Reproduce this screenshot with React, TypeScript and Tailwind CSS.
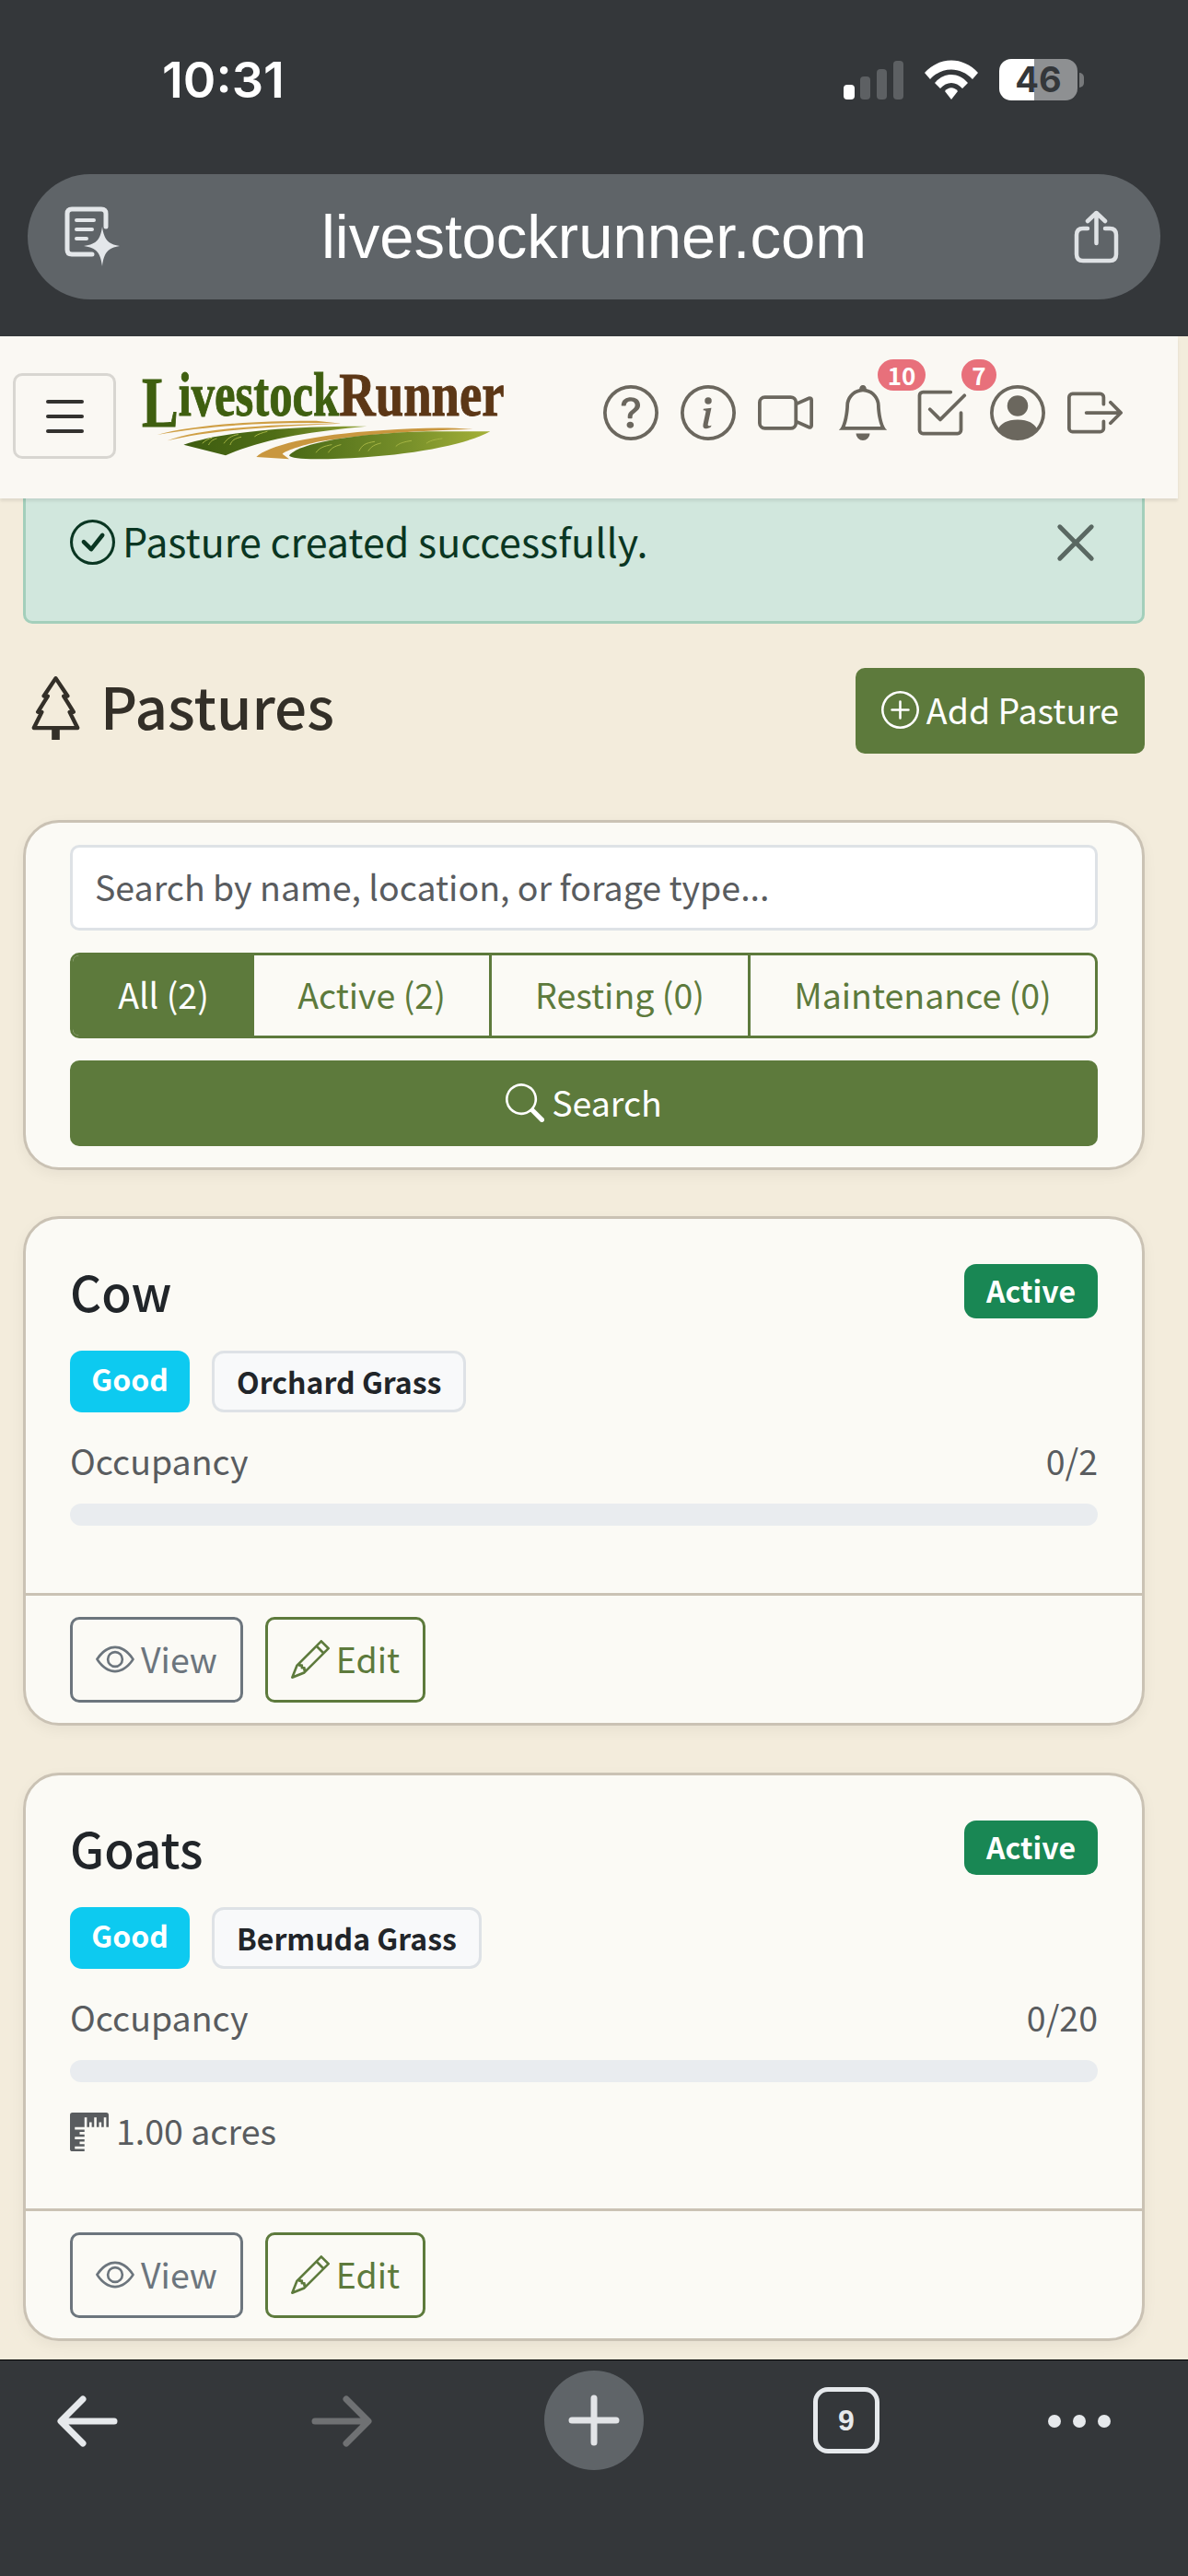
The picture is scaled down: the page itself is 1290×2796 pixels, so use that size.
import { ReactNode } from 'react';
import {
  BsBell,
  BsBoxArrowRight,
  BsCameraVideo,
  BsCheck2Square,
  BsCheckCircle,
  BsEye,
  BsInfoCircle,
  BsPencil,
  BsPersonCircle,
  BsPlusCircle,
  BsQuestionCircle,
  BsRulers,
  BsSearch,
  BsTree,
  BsXLg,
} from 'react-icons/bs';

interface Pasture {
  name: string;
  forage: string;
  occupancy: string;
  acres?: string;
}

const pastures: Pasture[] = [
  { name: 'Cow', forage: 'Orchard Grass', occupancy: '0/2' },
  { name: 'Goats', forage: 'Bermuda Grass', occupancy: '0/20', acres: '1.00 acres' },
];

const StatusBar = () => (
  <div className="flex h-[189px] items-start justify-between pl-[176px] pr-[113px] pt-[58px]">
    <span className="font-['Inter',sans-serif] text-[54px] font-semibold leading-[58px] text-white">10:31</span>
    <div className="flex items-center gap-[23px] pt-[6px]">
      <svg width="65" height="42" viewBox="0 0 65 42">
        <rect x="0" y="26" width="12" height="16" rx="4" fill="#fff" />
        <rect x="18" y="17" width="11" height="25" rx="4" fill="#5d6063" />
        <rect x="36" y="9" width="11" height="33" rx="4" fill="#5d6063" />
        <rect x="54" y="0" width="11" height="42" rx="4" fill="#5d6063" />
      </svg>
      <svg width="58" height="43" viewBox="0 0 58 43" fill="#fff">
        <path d="M0 14 C16 -4 42 -4 58 14 L52 21 C39 7 19 7 6 21 Z" />
        <path d="M11 25 C21 13 37 13 47 25 L41 31 C34 23 24 23 17 31 Z" />
        <path d="M22 34 C26 29 32 29 36 34 L29 43 Z" />
      </svg>
      <div className="flex items-center">
        <div className="flex h-[45px] w-[85px] items-center justify-center rounded-[13px] bg-[linear-gradient(90deg,#ffffff_45%,#8e9092_45%)] font-['Inter',sans-serif] text-[38px] font-bold text-[#34373a]">
          46
        </div>
        <div className="ml-[2px] h-[16px] w-[5px] rounded-r-full bg-[#77797b]" />
      </div>
    </div>
  </div>
);

const AddressBar = () => (
  <div className="mx-[30px] flex h-[136px] items-center justify-between rounded-[68px] bg-[#5f6468] pl-[40px] pr-[45px]">
    <svg width="62" height="66" viewBox="0 0 62 66" fill="none" stroke="#e4e7ea" strokeWidth="5">
      <path d="M30 52 H8 Q3 52 3 47 V8 Q3 3 8 3 H40 Q45 3 45 8 V22" strokeLinecap="round" />
      <path d="M13 15 H32 M13 25 H30 M13 35 H24" strokeLinecap="round" strokeWidth="4" />
      <path d="M41 22 C43 36 47 41 60 43 C47 45 43 50 41 65 C39 50 35 45 21 43 C35 41 39 36 41 22 Z" fill="#e4e7ea" stroke="none" />
    </svg>
    <span className="mr-[8px] pb-[2px] font-['Liberation_Sans',sans-serif] text-[67px] leading-none text-white">livestockrunner.com</span>
    <svg width="49" height="58" viewBox="0 0 49 58" fill="none" stroke="#dfe2e5" strokeWidth="4.5" strokeLinecap="round" strokeLinejoin="round">
      <path d="M15 20 H10 Q3 20 3 27 V48 Q3 55 10 55 H39 Q46 55 46 48 V27 Q46 20 39 20 H34" />
      <path d="M24.5 36 V3 M15 12 L24.5 3 L34 12" />
    </svg>
  </div>
);

const Logo = () => (
  <svg width="440" height="140" viewBox="0 0 1320 420" className="mb-[2px] ml-[4px] shrink-0">
    <defs>
      <linearGradient id="fieldLeft" x1="0" x2="1" y1="0" y2="0">
        <stop offset="0" stopColor="#3d5c10" />
        <stop offset="0.5" stopColor="#4f6d16" />
        <stop offset="1" stopColor="#93a538" />
      </linearGradient>
      <linearGradient id="fieldRight" x1="0" x2="1" y1="0" y2="0">
        <stop offset="0" stopColor="#4a6a17" />
        <stop offset="0.6" stopColor="#78902a" />
        <stop offset="1" stopColor="#a5b138" />
      </linearGradient>
    </defs>
    <text transform="translate(72 210) scale(0.76 1)" fontFamily="Liberation Serif, serif" fontWeight="700" fontSize="200" fill="#3f5f10" stroke="#3f5f10" strokeWidth="3">
      <tspan fontSize="235" dy="35">L</tspan>
      <tspan dy="-35">ivestock</tspan>
    </text>
    <text transform="translate(715 210) scale(0.8 1)" fontFamily="Liberation Serif, serif" fontWeight="700" fontSize="205" fill="#5c3716" stroke="#5c3716" strokeWidth="3">Runner</text>
    <path d="M122 273 C220 245 420 226 640 227 L722 236 C520 230 300 240 122 273 Z" fill="#cf9f45" />
    <path d="M155 292 C260 252 480 238 722 236 C500 246 300 256 155 292 Z" fill="#cf9f45" />
    <path d="M208 305 C340 262 560 244 805 245 C620 262 470 285 345 340 Z" fill="url(#fieldLeft)" />
    <path d="M445 345 C480 310 620 272 860 258 C960 250 1080 248 1150 255 C1000 258 800 270 650 295 C590 308 540 325 530 335 L552 352 Z" fill="#c9973f" />
    <path d="M552 340 C590 295 800 265 1020 262 L1207 262 C1120 310 900 350 640 352 C590 352 555 348 552 340 Z" fill="url(#fieldRight)" />
    <g fill="none" stroke="#a6b544" strokeWidth="3" strokeLinecap="round">
      <path d="M270 300 C280 290 290 285 300 283 M290 305 C295 295 300 290 315 285 M340 300 C350 285 365 275 385 272 M360 305 C365 290 375 285 395 280 M440 278 C450 270 465 266 480 262" />
      <path d="M640 330 C650 315 665 310 690 305 M680 330 C690 315 700 310 720 305 M780 325 C790 305 800 300 830 295 M810 325 C820 310 830 305 850 300 M900 310 C910 300 925 296 950 292 M1000 300 C1010 292 1025 288 1050 285" />
    </g>
  </svg>
);

const HeaderIcons = () => (
  <div className="flex items-center gap-[24px] pb-[7px] text-[#6b675e]">
    <BsQuestionCircle size={60} />
    <BsInfoCircle size={60} />
    <BsCameraVideo size={60} />
    <div className="relative">
      <BsBell size={60} />
      <span className="absolute left-[46px] top-[-28px] flex h-[34px] w-[52px] items-center justify-center rounded-full bg-[#e8707b] text-[26px] font-bold leading-none text-white">10</span>
    </div>
    <div className="relative">
      <BsCheck2Square size={60} />
      <span className="absolute left-[53px] top-[-28px] flex h-[34px] w-[38px] items-center justify-center rounded-full bg-[#e8707b] text-[26px] font-bold leading-none text-white">7</span>
    </div>
    <BsPersonCircle size={60} />
    <BsBoxArrowRight size={60} />
  </div>
);

const NavBar = () => (
  <nav className="relative z-10 flex h-[176px] w-[1279px] shrink-0 items-center bg-[#faf8f3] pb-[3px] pl-[14px] shadow-[0_3px_3px_rgba(0,0,0,0.08)]">
    <div className="flex h-[93px] w-[112px] flex-col items-center justify-center gap-[12px] rounded-[10px] border-[3px] border-[#d8d6d1]">
      <span className="h-[4px] w-[41px] rounded-full bg-[#33322f]" />
      <span className="h-[4px] w-[41px] rounded-full bg-[#33322f]" />
      <span className="h-[4px] w-[41px] rounded-full bg-[#33322f]" />
    </div>
    <Logo />
    <div className="ml-[85px]">
      <HeaderIcons />
    </div>
  </nav>
);

const Alert = () => (
  <div className="flex h-[136px] items-center justify-between rounded-b-[10px] border-[3px] border-t-0 border-[#a3cfbb] bg-[#d1e7dd] pb-[38px] pl-[48px] pr-[47px] text-[#0a3622]">
    <div className="flex items-center gap-[8px]">
      <BsCheckCircle size={49} />
      <span className="pb-[4px] text-[43px] leading-none">Pasture created successfully.</span>
    </div>
    <BsXLg size={50} stroke="currentColor" strokeWidth={0.6} className="text-[#5a6862]" />
  </div>
);

const SegmentButton = ({ label, active, className }: { label: string; active?: boolean; className: string }) => (
  <div className={`flex h-full items-center justify-center pb-[2px] text-[37.5px] ${active ? 'bg-[#5d7a3c] text-white' : 'text-[#5d7a3c]'} ${className}`}>
    {label}
  </div>
);

const SearchPanel = () => (
  <div className="mt-[72px] flex flex-col gap-[24px] rounded-[39px] border-[3px] border-[#cac2b4] bg-[#fbfaf5] px-[48px] pb-[23px] pt-[24px] shadow-[0_5px_15px_rgba(0,0,0,0.05)]">
    <div className="flex h-[93px] items-center rounded-[10px] border-[3px] border-[#dee2e6] bg-white px-[24px] pb-[2px] text-[37.5px] text-[#595c5f]">
      Search by name, location, or forage type...
    </div>
    <div className="flex h-[93px] overflow-hidden rounded-[10px] border-[3px] border-[#5d7a3c]">
      <SegmentButton label="All (2)" active className="w-[197px]" />
      <SegmentButton label="Active (2)" className="w-[258px] border-r-[3px] border-[#5d7a3c]" />
      <SegmentButton label="Resting (0)" className="w-[281px] border-r-[3px] border-[#5d7a3c]" />
      <SegmentButton label="Maintenance (0)" className="flex-1" />
    </div>
    <div className="flex h-[93px] items-center justify-center gap-[8px] rounded-[10px] bg-[#5d7a3c] pb-[2px] text-[37.5px] text-white">
      <BsSearch size={42} />
      Search
    </div>
  </div>
);

const OutlineButton = ({ icon, label, className }: { icon: ReactNode; label: string; className: string }) => (
  <div className={`flex h-[93px] items-center justify-center gap-[7px] rounded-[10px] border-[3px] pb-[2px] text-[37.5px] ${className}`}>
    {icon}
    {label}
  </div>
);

const PastureCard = ({ pasture }: { pasture: Pasture }) => (
  <div className="overflow-hidden rounded-[39px] border-[3px] border-[#cac2b4] bg-[#fbfaf5] shadow-[0_5px_15px_rgba(0,0,0,0.05)]">
    <div className="px-[48px] pb-[62px] pt-[49px]">
      <div className="flex h-[59px] items-center justify-between">
        <h3 className="text-[53px] font-medium leading-none text-[#212529]">{pasture.name}</h3>
        <span className="flex h-[59px] w-[145px] items-center justify-center rounded-[13px] bg-[#198754] pb-[3px] text-[32px] font-bold text-white">Active</span>
      </div>
      <div className="mt-[35px] flex gap-[24px]">
        <span className="flex h-[67px] w-[130px] items-center justify-center rounded-[13px] bg-[#0dcaf0] pb-[7px] text-[32px] font-bold text-white">Good</span>
        <span className="flex h-[67px] items-center rounded-[13px] border-[3px] border-[#dee2e6] bg-[#f8f9fa] px-[24px] pb-[1px] text-[32px] font-bold text-[#212529]">{pasture.forage}</span>
      </div>
      <div className="mb-[-2px] mt-[27px] flex h-[50px] items-center justify-between text-[37.5px] text-[#595c5f]">
        <span>Occupancy</span>
        <span>{pasture.occupancy}</span>
      </div>
      <div className="mt-[24px] h-[24px] rounded-full bg-[#e9ecef]" />
      {pasture.acres ? (
        <div className="mt-[33px] flex h-[42px] items-center gap-[8px] text-[37.5px] text-[#595c5f]">
          <BsRulers size={42} />
          <span className="pb-[3px]">{pasture.acres}</span>
        </div>
      ) : (
        <div className="h-[11px]" />
      )}
    </div>
    <div className="flex gap-[24px] border-t-[3px] border-[#cac2b4] px-[48px] pb-[22px] pt-[23px]">
      <OutlineButton icon={<BsEye size={42} />} label="View" className="w-[188px] border-[#6c757d] text-[#6c757d]" />
      <OutlineButton icon={<BsPencil size={42} />} label="Edit" className="w-[174px] border-[#5d7a3c] text-[#5d7a3c]" />
    </div>
  </div>
);

const BottomBar = () => (
  <div className="flex h-[235px] shrink-0 items-start border-t border-black bg-[#34373a] pl-[62px] pt-[11px]">
    <svg width="66" height="56" viewBox="0 0 66 56" className="mt-[27px]" fill="none" stroke="#e6e9ec" strokeWidth="7" strokeLinecap="round" strokeLinejoin="round">
      <path d="M62 28 H5 M28 4 L4 28 L28 52" />
    </svg>
    <svg width="66" height="56" viewBox="0 0 66 56" className="ml-[210px] mt-[27px]" fill="none" stroke="#6f7173" strokeWidth="7" strokeLinecap="round" strokeLinejoin="round">
      <path d="M4 28 H61 M38 4 L62 28 L38 52" />
    </svg>
    <div className="ml-[187px] flex h-[108px] w-[108px] items-center justify-center rounded-full bg-[#5f6468]">
      <svg width="56" height="56" viewBox="0 0 56 56" stroke="#e2e4e7" strokeWidth="7" strokeLinecap="round">
        <path d="M28 4 V52 M4 28 H52" />
      </svg>
    </div>
    <div className="ml-[184px] mt-[18px] flex h-[72px] w-[72px] items-center justify-center rounded-[16px] border-[5px] border-[#e6e9ec] font-['Liberation_Sans',sans-serif] text-[32px] font-bold text-[#e6e9ec]">9</div>
    <div className="ml-[183px] mt-[48px] flex gap-[13px]">
      <span className="h-[14px] w-[14px] rounded-full bg-[#e6e9ec]" />
      <span className="h-[14px] w-[14px] rounded-full bg-[#e6e9ec]" />
      <span className="h-[14px] w-[14px] rounded-full bg-[#e6e9ec]" />
    </div>
  </div>
);

export default function App() {
  return (
    <div className="flex h-[2796px] w-[1290px] flex-col overflow-hidden bg-[#f3ecdc] font-['Noto_Sans_CJK_SC','Noto_Sans',sans-serif]">
      <div className="h-[365px] shrink-0 bg-[#34373a]">
        <StatusBar />
        <AddressBar />
      </div>
      <NavBar />
      <main className="min-h-0 flex-1 overflow-hidden pl-[25px] pr-[47px]">
        <Alert />
        <div className="mt-[48px] flex h-[93px] items-center justify-between">
          <div className="flex items-center gap-[14px] pb-[6px] pl-[1px] text-[#332f28]">
            <BsTree size={69} />
            <h1 className="pb-[8px] text-[62px] font-medium leading-none">Pastures</h1>
          </div>
          <div className="flex h-[93px] w-[314px] items-center justify-center gap-[8px] rounded-[10px] bg-[#5d7a3c] pb-[2px] text-[37.5px] text-white">
            <BsPlusCircle size={41} />
            Add Pasture
          </div>
        </div>
        <SearchPanel />
        <div className="mt-[50px] flex flex-col gap-[51px]">
          {pastures.map((pasture) => (
            <PastureCard key={pasture.name} pasture={pasture} />
          ))}
        </div>
      </main>
      <BottomBar />
    </div>
  );
}
